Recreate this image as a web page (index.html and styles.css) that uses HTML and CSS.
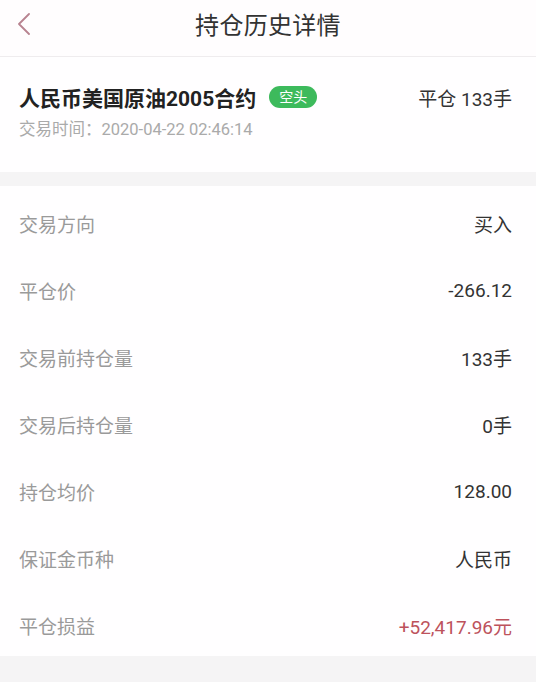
FILE: index.html
```html
<!DOCTYPE html>
<html lang="zh">
<head>
<meta charset="utf-8">
<link rel="stylesheet" href="styles.css">
</head>
<body>
<div class="page">
  <header class="nav">
    <div class="back">
      <svg width="14" height="22" viewBox="0 0 14 22"><path d="M12 1 L2 11 L12 21" fill="none" stroke="#b88390" stroke-width="1.8" stroke-linecap="round" stroke-linejoin="round"/></svg>
    </div>
    <div class="nav-title">持仓历史详情</div>
  </header>
  <section class="summary">
    <div class="sum-top">
      <div class="sum-name">人民币美国原油2005合约<span class="badge">空头</span></div>
      <div class="sum-qty">平仓 133手</div>
    </div>
    <div class="sum-time">交易时间：2020-04-22 02:46:14</div>
  </section>
  <section class="list">
    <div class="row"><span class="label">交易方向</span><span class="value">买入</span></div>
    <div class="row"><span class="label">平仓价</span><span class="value">-266.12</span></div>
    <div class="row"><span class="label">交易前持仓量</span><span class="value">133手</span></div>
    <div class="row"><span class="label">交易后持仓量</span><span class="value">0手</span></div>
    <div class="row"><span class="label">持仓均价</span><span class="value">128.00</span></div>
    <div class="row"><span class="label">保证金币种</span><span class="value">人民币</span></div>
    <div class="row"><span class="label">平仓损益</span><span class="value red">+52,417.96元</span></div>
  </section>
</div>
</body>
</html>
```

FILE: styles.css
```css
html, body {
  margin: 0;
  padding: 0;
  background: #f5f4f5;
  font-family: Roboto, "Noto Sans CJK SC", sans-serif;
}
.page {
  width: 536px;
  min-height: 682px;
  background: #f5f4f5;
}
.nav {
  height: 56px;
  background: #fffdfe;
  border-bottom: 1px solid #efecee;
  display: flex;
  align-items: center;
  justify-content: center;
  position: relative;
}
.back {
  position: absolute;
  left: 17px;
  top: 13px;
  width: 14px;
  height: 22px;
}
.back svg { display: block; }
.nav-title {
  font-size: 24px;
  color: #333;
  letter-spacing: 0.3px;
  margin-top: -9px;
}
.summary {
  background: #fffeff;
  height: 115px;
  box-sizing: border-box;
  padding: 26px 24px 0 19px;
}
.sum-top {
  display: flex;
  justify-content: space-between;
  align-items: center;
  height: 28px;
}
.sum-name {
  font-size: 21px;
  font-weight: bold;
  color: #222;
  display: flex;
  align-items: center;
}
.badge {
  display: inline-block;
  margin-left: 13px;
  background: #3dba5c;
  color: #fff;
  font-size: 14px;
  font-weight: normal;
  height: 22px;
  line-height: 22px;
  padding: 0 10px;
  border-radius: 11px;
}
.sum-qty {
  font-size: 19px;
  color: #333;
}
.sum-time {
  margin-top: 5px;
  font-size: 16.5px;
  color: #aaa;
}
.list {
  margin-top: 14px;
  background: #fffeff;
  padding-top: 4px;
  height: 470px;
  box-sizing: border-box;
}
.row {
  height: 67px;
  display: flex;
  justify-content: space-between;
  align-items: center;
  padding: 0 24px 0 19px;
}
.label {
  font-size: 19px;
  color: #9a9a9a;
}
.value {
  font-size: 19px;
  color: #333;
}
.value.red {
  color: #bd525c;
}
```
